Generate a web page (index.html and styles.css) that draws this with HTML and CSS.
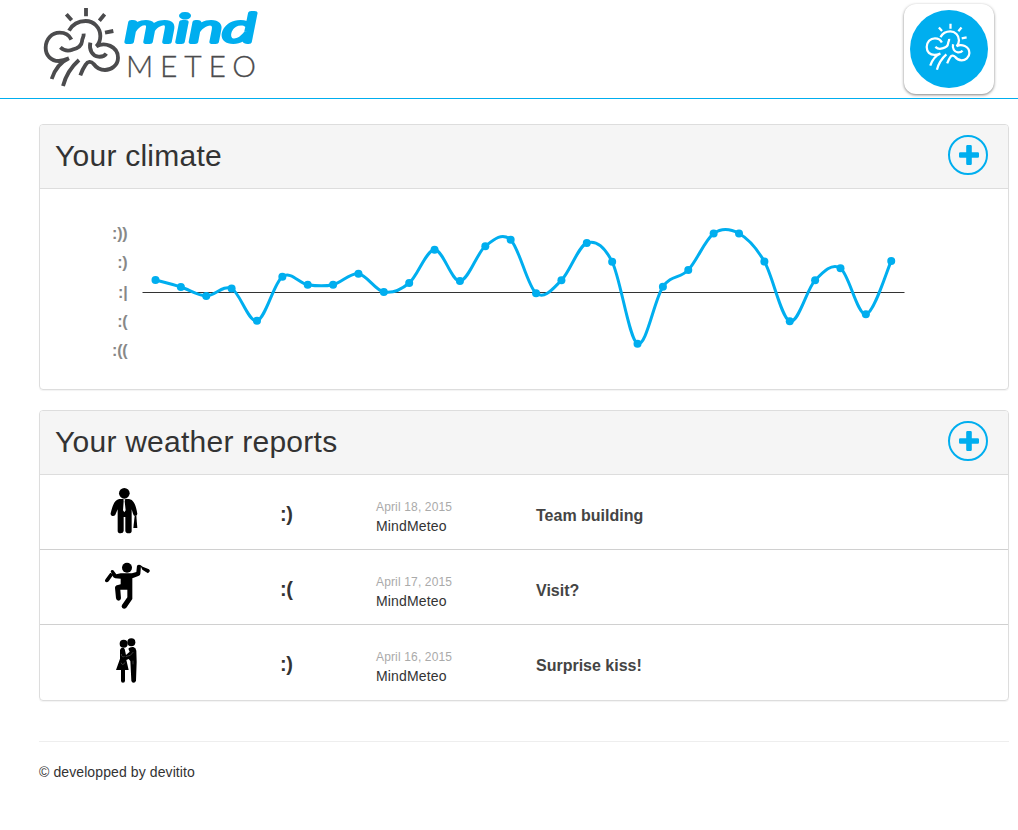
FILE: index.html
```html
<!DOCTYPE html>
<html lang="en">
<head>
<meta charset="utf-8">
<title>MindMeteo</title>
<link rel="stylesheet" href="styles.css">
</head>
<body>
<svg class="defs" aria-hidden="true">
  <symbol id="cloud" viewBox="0 0 300 300">
    <g fill="none" stroke="currentColor" stroke-width="11.5">
      <path d="M150 24V49M91 43L107 61M206 43L190 62M207 98L232 93"/>
      <path d="M99 92C110 72 130 63 149 63C174 63 193 84 193 108C193 120 189 131 181 139C205 125 246 138 246 173C246 196 225 210 207 210C189 210 181 203 173 192C165 183 155 184 149 194C142 204 137 215 133 226"/>
      <path d="M106 119C99 104 86 98 71 98C47 98 29 118 29 143C29 167 46 183 68 183C80 183 88 180 99 175C76 185 57 207 47 237"/>
      <path d="M129 180C102 204 89 227 81 258M73 142C83 151 97 154 109 149C126 145 137 136 138 124C138 114 144 113 143 101M163 128C158 150 170 168 187 170C198 171 206 168 211 161"/>
    </g>
  </symbol>
  <symbol id="plus" viewBox="0 0 20 20">
    <path fill="currentColor" d="M8.500 0h3a1.300 1.300 0 0 1 1.300 1.300v5.900h5.900A1.300 1.300 0 0 1 20 8.500v3a1.300 1.300 0 0 1-1.300 1.300h-5.900v5.900a1.300 1.300 0 0 1-1.300 1.300h-3a1.300 1.300 0 0 1-1.300-1.300v-5.900H1.300A1.300 1.300 0 0 1 0 11.500v-3a1.300 1.300 0 0 1 1.300-1.300h5.900V1.300A1.300 1.300 0 0 1 8.500 0z"/>
  </symbol>
</svg>
<header class="topbar">
  <a class="brand">
    <svg class="brand-cloud"><use href="#cloud"/></svg>
    <svg class="brand-name" viewBox="0 0 142 98">
      <text class="mind" x="5" y="42" textLength="131" lengthAdjust="spacingAndGlyphs">mind</text>
      <text class="meteo" x="6" y="77" textLength="130" lengthAdjust="spacing">METEO</text>
    </svg>
  </a>
  <div class="avatar"><div class="avatar-disc"><svg class="avatar-cloud"><use href="#cloud"/></svg></div></div>
</header>
<main class="container">
  <section class="panel">
    <div class="panel-heading"><h2>Your climate</h2><a class="add"><svg><use href="#plus"/></svg></a></div>
    <svg class="chart" viewBox="40 189 968 200">
      <g class="scale">
        <text x="127.500" y="239">:))</text>
        <text x="127.500" y="268">:)</text>
        <text x="127.500" y="298">:|</text>
        <text x="127.500" y="327">:(</text>
        <text x="127.500" y="356">:((</text>
      </g>
      <path class="axis" d="M142.500 292.500H904.500"/>
      <path class="curve" id="curve"/>
      <g class="points" id="points"></g>
    </svg>
  </section>
  <section class="panel">
    <div class="panel-heading"><h2>Your weather reports</h2><a class="add"><svg><use href="#plus"/></svg></a></div>
    <ul class="reports">
      <li class="report">
        <svg class="figure" viewBox="0 0 240 195">
          <circle cx="103" cy="40" r="16"/>
          <path d="M88 57H117C132 59 138 78 142 101Q142 108 135 108Q131 108 129 101L125 88V153Q125 160 116 160Q107 160 106 153V111H101V153Q100 160 92 160Q83 160 83 153V88L76 104Q73 109 67 108Q61 106 62 100C67 79 73 59 88 57Z"/>
          <path d="M134 108H139L142 144H130Z"/>
          <path class="tie" d="M100 58H106L104 63L107 91L103 97L99 91L101 63Z"/>
        </svg>
        <span class="mood">:)</span>
        <div class="meta"><span class="date">April 18, 2015</span><span class="author">MindMeteo</span></div>
        <strong class="title">Team building</strong>
      </li>
      <li class="report">
        <svg class="figure" viewBox="0 0 240 195">
          <circle cx="111" cy="38" r="15"/>
          <path d="M92 55H126L139 51L141 32Q147 26 153 32L151 57Q150 61 145 63L127 70V103L127 132L109 158Q103 164 97 159Q93 155 96 150L112 127V104H91L93 130Q92 137 86 137Q79 137 78 130L75 99Q75 91 84 90L92 88V71L76 70Q70 69 68 63L62 49Q64 43 70 46L79 58Z"/>
          <path d="M61 53L70 59L56 79Q50 85 45 79Q44 76 47 72ZM150 29L158 35L177 43L180 48L174 55L157 44Z"/>
        </svg>
        <span class="mood">:(</span>
        <div class="meta"><span class="date">April 17, 2015</span><span class="author">MindMeteo</span></div>
        <strong class="title">Visit?</strong>
      </li>
      <li class="report">
        <svg class="figure" viewBox="0 0 240 195">
          <circle cx="101" cy="41" r="12"/><circle cx="124" cy="37" r="12"/>
          <path d="M93 55Q100 50 104 57L108 75L119 65L115 56Q119 50 130 51Q138 53 139 62L140 96L138 152Q136 158 131 158Q125 158 124 152L121 93L116 87L109 90L116 120H105V152Q105 158 99 158Q93 158 93 152V120H78L90 86V60Z"/>
          <path class="crease" d="M94 72Q95 84 104 79M107 80L121 76L130 66M93 98Q98 110 105 97M129 92V103"/>
        </svg>
        <span class="mood">:)</span>
        <div class="meta"><span class="date">April 16, 2015</span><span class="author">MindMeteo</span></div>
        <strong class="title">Surprise kiss!</strong>
      </li>
    </ul>
  </section>
  <footer class="footer">© developped by devitito</footer>
</main>
<script src="chart.js"></script>
</body>
</html>
```
FILE: styles.css
```css
* { box-sizing: border-box; }
body { margin: 0; font: 14px/20px "Liberation Sans", Arial, sans-serif; color: #333; background: #fff; }
h2, ul { margin: 0; padding: 0; }
svg { display: block; }
.defs { position: absolute; width: 0; height: 0; }

.topbar { display: flex; justify-content: space-between; height: 99px; padding: 0 24px 0 36px; border-bottom: 1px solid #00aeef; }
.brand { display: flex; }
.brand-cloud { width: 100px; height: 100px; margin-right: -16px; color: #4b4b4d; }
.brand-name { width: 142px; height: 98px; }
.mind { font: italic 300 40px Lato, sans-serif; fill: #00aeef; stroke: #00aeef; stroke-width: 4; stroke-linejoin: round; }
.meteo { font: 300 30px Lato, sans-serif; fill: #4b4b4d; stroke: #4b4b4d; stroke-width: .3; }
.avatar { width: 90px; height: 90px; margin-top: 4px; padding: 6px; border-radius: 12px; box-shadow: 0 1px 3px rgba(0, 0, 0, .5); }
.avatar-disc { width: 78px; height: 78px; padding: 9px 0 0 11px; border-radius: 50%; background: #00aeef; color: #fff; }
.avatar-cloud { width: 59px; height: 59px; }

.container { width: 970px; margin: 25px 0 0 39px; }
.panel { margin-bottom: 20px; border: 1px solid #ddd; border-radius: 4px; box-shadow: 0 1px 1px rgba(0, 0, 0, .05); overflow: hidden; }
.panel-heading { display: flex; justify-content: space-between; height: 64px; padding: 10px 20px 0 15px; background: #f5f5f5; border-bottom: 1px solid #ddd; }
.panel-heading h2 { font-size: 30px; font-weight: 400; line-height: 41px; letter-spacing: .25px; }
.add { display: flex; align-items: center; justify-content: center; width: 40px; height: 40px; border: 2px solid #00aeef; border-radius: 50%; color: #00aeef; }
.add svg { width: 20px; height: 20px; margin-left: 1px; }

.chart { width: 968px; height: 200px; }
.scale { font-size: 16px; font-weight: 700; fill: #888; text-anchor: end; letter-spacing: -.2px; }
.axis { stroke: #333; stroke-width: 1; }
.curve { fill: none; stroke: #00aeef; stroke-width: 3; stroke-linejoin: round; }
.points { fill: #00aeef; }

.reports { list-style: none; }
.report { display: grid; grid-template-columns: 190px 96px 160px 1fr; height: 75px; padding: 5px 0 0 50px; border-bottom: 1px solid #d0d0d0; }
.report:last-child { border-bottom: 0; }
.figure { width: 80px; height: 65px; }
.tie { fill: #fff; }
.crease { fill: none; stroke: #777; stroke-width: 1.500; }
.mood { font-size: 20px; font-weight: 700; line-height: 69px; letter-spacing: -.4px; }
.meta { display: flex; flex-direction: column; padding-top: 18px; line-height: 19px; }
.date { font-size: 12px; color: #aaa; letter-spacing: .15px; }
.author { letter-spacing: .15px; }
.title { font-size: 16px; line-height: 71px; color: #444; }
.footer { margin-top: 40px; padding-top: 20px; border-top: 1px solid #eee; letter-spacing: .1px; }
```
FILE: chart.js
```javascript
const values = [280, 287, 296, 288.5, 320.8, 276.7, 284.7, 284.7, 273.8, 292, 283, 249.8, 281, 246.2, 239.8,
  293.2, 280.3, 243, 261.8, 343.7, 286.8, 270, 233.5, 233.5, 261.6, 321.3, 280.3, 268.2, 314.3, 261];
const pts = values.map((y, i) => [155.5 + i * 25.37, y]);
const at = i => pts[Math.max(0, Math.min(pts.length - 1, i))];

// Catmull-Rom spline expressed as cubic segments
let d = "M" + pts[0];
for (let i = 0; i < pts.length - 1; i++) {
  const [a, b, c, e] = [at(i - 1), at(i), at(i + 1), at(i + 2)];
  d += "C" + [b[0] + (c[0] - a[0]) / 6, b[1] + (c[1] - a[1]) / 6,
    c[0] - (e[0] - b[0]) / 6, c[1] - (e[1] - b[1]) / 6, c[0], c[1]].join(" ");
}
document.getElementById("curve").setAttribute("d", d);

const group = document.getElementById("points");
for (const [x, y] of pts) {
  const dot = document.createElementNS("http://www.w3.org/2000/svg", "circle");
  dot.setAttribute("cx", x);
  dot.setAttribute("cy", y);
  dot.setAttribute("r", 4);
  group.append(dot);
}
```
